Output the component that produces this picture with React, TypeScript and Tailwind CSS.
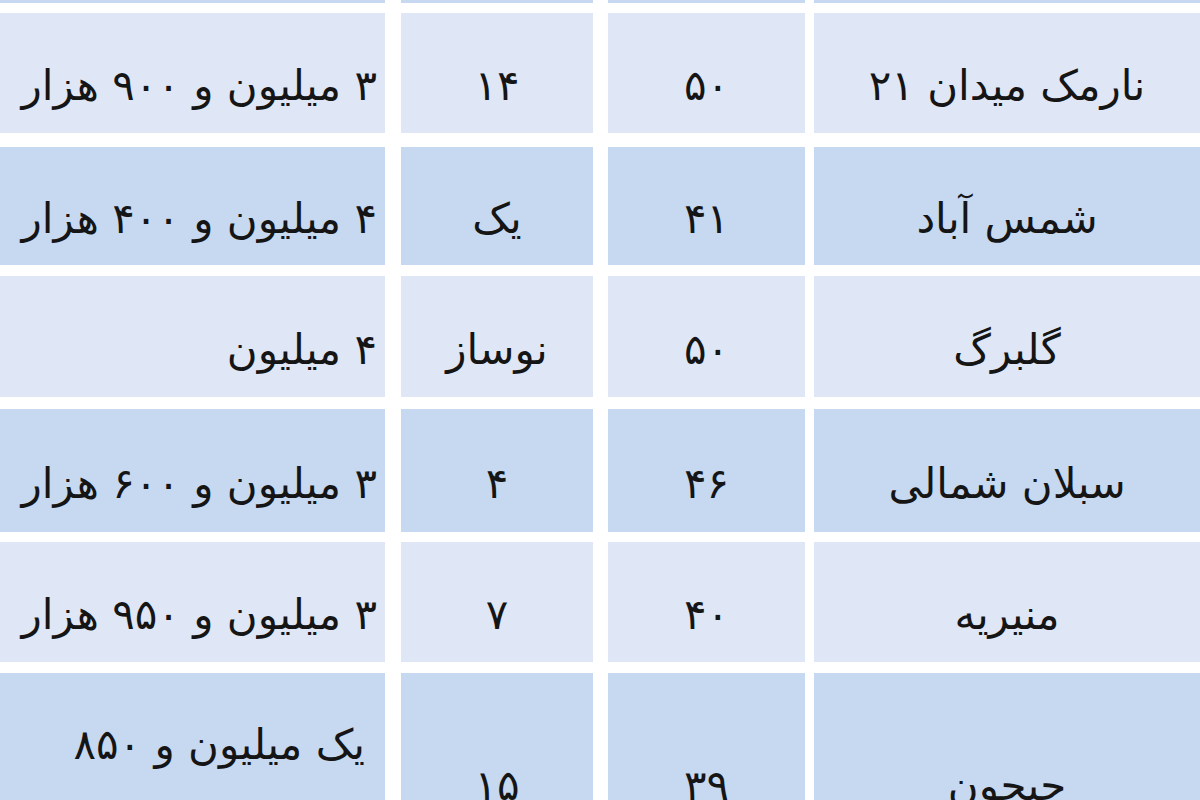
import React from "react";

const LIGHT = "bg-[#dfe6f5]";
const DARK = "bg-[#c6d9f1]";

type Row = {
  price: string;
  age: string;
  area: string;
  name: string;
  dark: boolean;
  h: string;
  mt: string;
};

const rows: Row[] = [
  { price: "۳ میلیون و ۹۰۰ هزار", age: "۱۴", area: "۵۰", name: "نارمک میدان ۲۱", dark: false, h: "h-[120px]", mt: "mt-[10px]" },
  { price: "۴ میلیون و ۴۰۰ هزار", age: "یک", area: "۴۱", name: "شمس آباد", dark: true, h: "h-[118px]", mt: "mt-[14px]" },
  { price: "۴ میلیون", age: "نوساز", area: "۵۰", name: "گلبرگ", dark: false, h: "h-[121px]", mt: "mt-[11px]" },
  { price: "۳ میلیون و ۶۰۰ هزار", age: "۴", area: "۴۶", name: "سبلان شمالی", dark: true, h: "h-[123px]", mt: "mt-[12px]" },
  { price: "۳ میلیون و ۹۵۰ هزار", age: "۷", area: "۴۰", name: "منیریه", dark: false, h: "h-[120px]", mt: "mt-[10px]" },
];

const font = "font-['DejaVu_Sans',sans-serif]";
const txt = "text-[42px] leading-none tracking-[-0.5px]";

function Cell({ children, className }: { children: React.ReactNode; className: string }) {
  return <div className={`flex items-center ${className}`}>{children}</div>;
}

export default function App() {
  return (
    <div className={`w-[1200px] h-[800px] overflow-hidden bg-white text-[#151515] ${font}`}>
      <div className="flex h-[3px]">
        <div className={`w-[385px] ${DARK}`} />
        <div className={`ml-[16px] w-[192px] ${DARK}`} />
        <div className={`ml-[15px] w-[197px] ${DARK}`} />
        <div className={`ml-[9px] flex-1 ${DARK}`} />
      </div>
      {rows.map((r, i) => {
        const bg = r.dark ? DARK : LIGHT;
        return (
          <div key={i} className={`flex ${r.h} ${r.mt}`}>
            <Cell className={`w-[385px] justify-end pr-[8px] pt-[26px] ${bg}`}>
              <span dir="rtl" className={`${txt} whitespace-nowrap`}>{r.price}</span>
            </Cell>
            <Cell className={`ml-[16px] w-[192px] justify-center pt-[26px] ${bg}`}>
              <span dir="rtl" className={txt}>{r.age}</span>
            </Cell>
            <Cell className={`ml-[15px] w-[197px] justify-center pt-[26px] ${bg}`}>
              <span dir="rtl" className={txt}>{r.area}</span>
            </Cell>
            <Cell className={`ml-[9px] flex-1 justify-center pt-[26px] ${bg}`}>
              <span dir="rtl" className={`${txt} whitespace-nowrap`}>{r.name}</span>
            </Cell>
          </div>
        );
      })}
      <div className="flex h-[200px] mt-[11px]">
        <Cell className={`w-[385px] justify-end pr-[20px] pt-[24px] ${DARK}`}>
          <span dir="rtl" className="text-[42px] leading-[80px] tracking-[-0.5px] text-right">
            یک میلیون و ۸۵۰
            <br />
            هزار
          </span>
        </Cell>
        <Cell className={`ml-[16px] w-[192px] justify-center pt-[26px] ${DARK}`}>
          <span dir="rtl" className={txt}>۱۵</span>
        </Cell>
        <Cell className={`ml-[15px] w-[197px] justify-center pt-[26px] ${DARK}`}>
          <span dir="rtl" className={txt}>۳۹</span>
        </Cell>
        <Cell className={`ml-[9px] flex-1 justify-center pt-[26px] ${DARK}`}>
          <span dir="rtl" className={txt}>جیحون</span>
        </Cell>
      </div>
    </div>
  );
}
